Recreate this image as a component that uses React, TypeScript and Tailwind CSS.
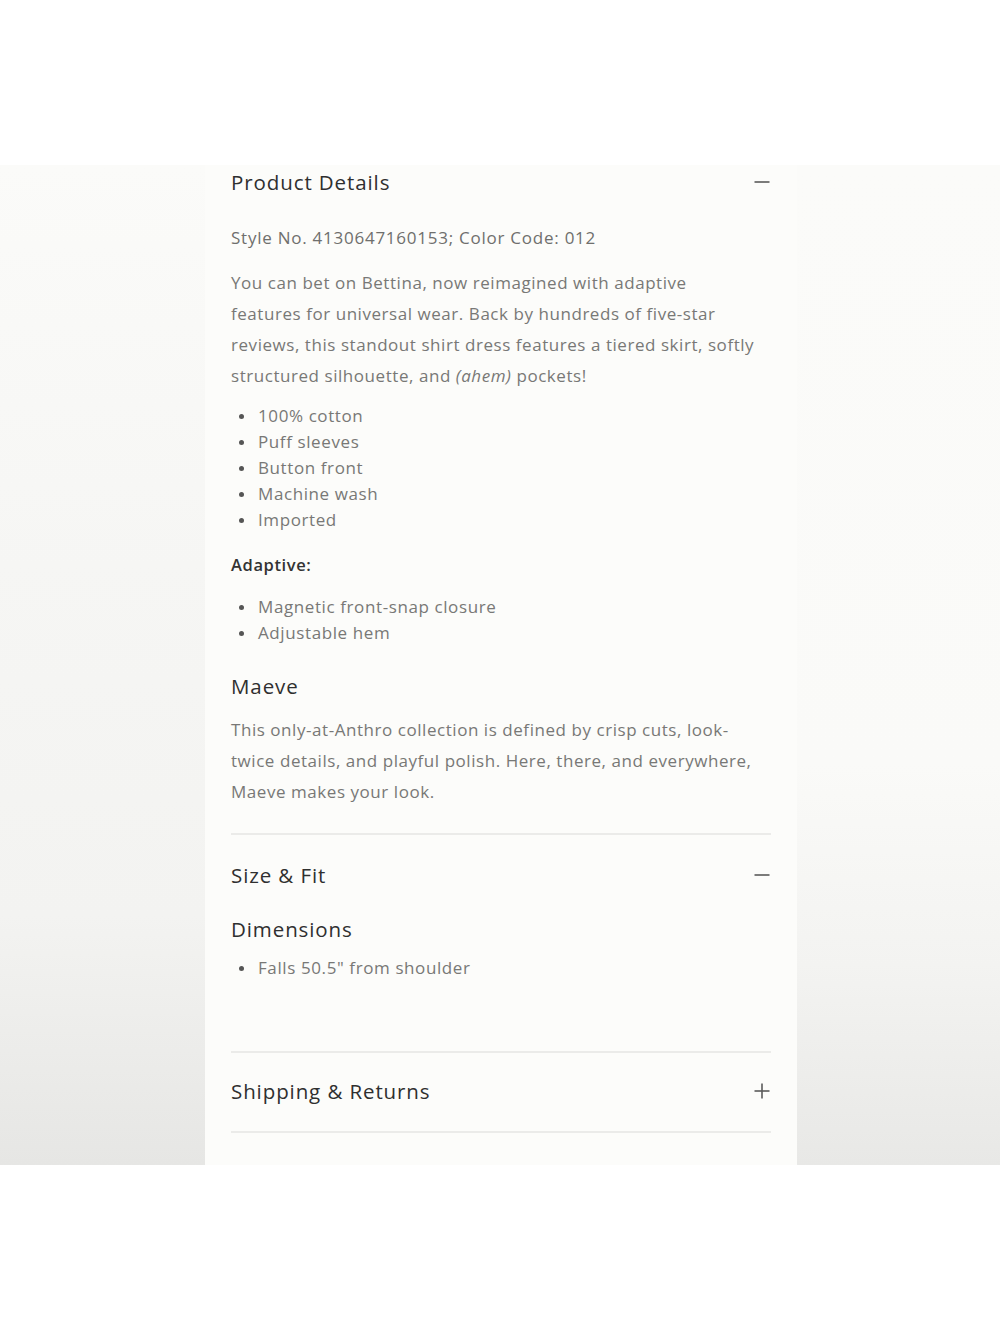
import React from "react";

const font = { fontFamily: "'Open Sans', 'Noto Sans', sans-serif" };

function Minus() {
  return (
    <svg width="16" height="16" viewBox="0 0 16 16" className="shrink-0">
      <line x1="0.5" y1="8" x2="15.5" y2="8" stroke="#5a5a5a" strokeWidth="1.6" />
    </svg>
  );
}

function Plus() {
  return (
    <svg width="16" height="16" viewBox="0 0 16 16" className="shrink-0">
      <line x1="0.5" y1="8" x2="15.5" y2="8" stroke="#5a5a5a" strokeWidth="1.6" />
      <line x1="8" y1="0.5" x2="8" y2="15.5" stroke="#5a5a5a" strokeWidth="1.6" />
    </svg>
  );
}

function Bullets({ items }: { items: string[] }) {
  return (
    <ul className="flex flex-col">
      {items.map((t) => (
        <li key={t} className="flex items-center h-[26px] text-[17px] tracking-[0.6px] text-[#787876]">
          <span className="w-[5px] h-[5px] rounded-full bg-[#555] ml-[8px] mr-[14px] shrink-0" />
          <span className="whitespace-nowrap">{t}</span>
        </li>
      ))}
    </ul>
  );
}

export default function App() {
  return (
    <div className="w-[1000px] h-[1333px] bg-white flex flex-col" style={font}>
      <div className="h-[165px] shrink-0" />
      <div className="h-[1000px] flex shrink-0">
        <div className="w-[205px] bg-[linear-gradient(180deg,#fbfbf9_0%,#f6f6f4_40%,#f3f3f1_75%,#e6e6e4_100%)]" />
        <div className="w-[592px] bg-[#fcfcfa] px-[26px] flex flex-col">
          <div className="h-[34px] flex items-center justify-between">
            <span className="text-[20.5px] tracking-[0.9px] font-medium text-[#2f2f2f]">Product Details</span>
            <span className="mr-[1px]"><Minus /></span>
          </div>
          <div className="mt-[27px] text-[17px] tracking-[0.75px] text-[#6f6f6d] leading-[24px] whitespace-nowrap">
            Style No. 4130647160153; Color Code: 012
          </div>
          <p className="mt-[17px] text-[17px] tracking-[0.55px] text-[#787876] leading-[31px] whitespace-nowrap">
            You can bet on Bettina, now reimagined with adaptive<br />
            features for universal wear. Back by hundreds of five-star<br />
            reviews, this standout shirt dress features a tiered skirt, softly<br />
            structured silhouette, and <i>(ahem)</i> pockets!
          </p>
          <div className="mt-[12px]">
            <Bullets items={["100% cotton", "Puff sleeves", "Button front", "Machine wash", "Imported"]} />
          </div>
          <div className="mt-[20px] h-[24px] flex items-center text-[16.5px] tracking-[0.6px] font-semibold text-[#333]">
            Adaptive:
          </div>
          <div className="mt-[17px]">
            <Bullets items={["Magnetic front-snap closure", "Adjustable hem"]} />
          </div>
          <div className="mt-[26px] h-[28px] flex items-center text-[20.5px] tracking-[0.9px] font-medium text-[#2f2f2f]">
            Maeve
          </div>
          <p className="mt-[14px] text-[17px] tracking-[0.55px] text-[#787876] leading-[31px] whitespace-nowrap">
            This only-at-Anthro collection is defined by crisp cuts, look-<br />
            twice details, and playful polish. Here, there, and everywhere,<br />
            Maeve makes your look.
          </p>
          <div className="mt-[26px] h-[2px] bg-[#ebebe9]" />
          <div className="mt-[25px] h-[30px] flex items-center justify-between">
            <span className="text-[20.5px] tracking-[0.9px] font-medium text-[#2f2f2f]">Size &amp; Fit</span>
            <span className="mr-[1px]"><Minus /></span>
          </div>
          <div className="mt-[24px] h-[30px] flex items-center text-[20.5px] tracking-[0.9px] font-medium text-[#2f2f2f]">
            Dimensions
          </div>
          <div className="mt-[11px]">
            <Bullets items={['Falls 50.5" from shoulder']} />
          </div>
          <div className="mt-[70px] h-[2px] bg-[#ebebe9]" />
          <div className="mt-[23px] h-[30px] flex items-center justify-between">
            <span className="text-[20.5px] tracking-[0.9px] font-medium text-[#2f2f2f]">Shipping &amp; Returns</span>
            <span className="mr-[1px]"><Plus /></span>
          </div>
          <div className="mt-[25px] h-[2px] bg-[#ebebe9]" />
        </div>
        <div className="flex-1 bg-[linear-gradient(180deg,#fbfbf9_0%,#fafaf8_60%,#f3f3f1_80%,#e8e8e6_100%)]" />
      </div>
    </div>
  );
}
